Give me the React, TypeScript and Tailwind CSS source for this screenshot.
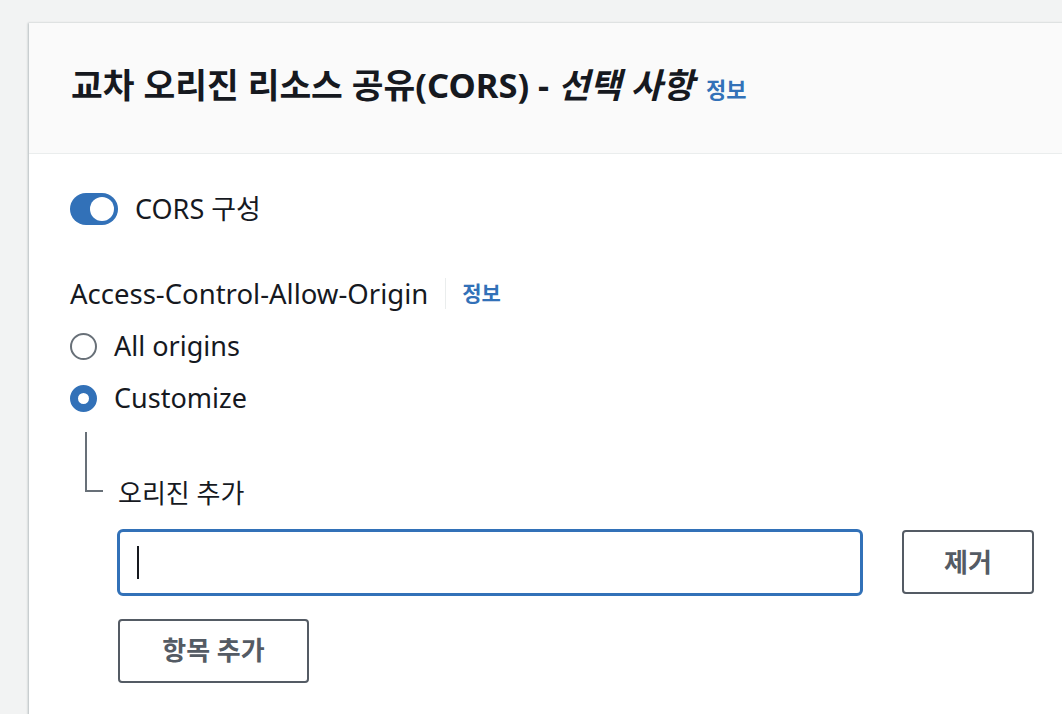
import React from 'react';

const font = { fontFamily: '"Noto Sans", "Noto Sans CJK KR", sans-serif' };

const App = () => {
  return (
    <div className="min-h-screen w-[1062px] h-[714px] overflow-hidden bg-[#f2f3f3] pt-[23px] pl-[29px]" style={font}>
      <div className="h-[700px] w-[1060px] bg-white shadow-[0_1px_2px_1px_rgba(0,28,36,0.25)]">
        {/* Header */}
        <div className="h-[131px] bg-[#fafafa] border-b border-[#eaeded] flex items-center pl-[42px] pb-[2px]">
          <h2 className="text-[34.5px] font-bold text-[#16191f] leading-[44px]">
            교차 오리진 리소스 공유(CORS) - <i>선택 사항</i>
            <span className="ml-[12px] text-[22px] text-[#3271b8] not-italic">정보</span>
          </h2>
        </div>

        {/* Body */}
        <div className="pl-[41px] pt-[35px]">
          <div className="flex items-center gap-[17px]">
            <div className="w-[48px] h-[32px] rounded-full bg-[#3271b8] relative">
              <div className="absolute right-[4px] top-[4px] w-[24px] h-[24px] rounded-full bg-white" />
            </div>
            <span className="text-[27px] text-[#16191f]">CORS 구성</span>
          </div>

          <div className="mt-[46px] flex items-center h-[36px]">
            <span className="text-[27.5px] text-[#16191f]">Access-Control-Allow-Origin</span>
            <span className="ml-[17px] w-px h-[31px] bg-[#eaeded]" />
            <span className="ml-[16px] text-[21px] font-bold text-[#3271b8]">정보</span>
          </div>

          <div className="mt-[17px] flex flex-col gap-[16px]">
            <label className="flex items-center gap-[17px] h-[36px]">
              <span className="w-[27px] h-[27px] rounded-full border-[2px] border-[#687078] bg-white" />
              <span className="text-[27px] text-[#16191f]">All origins</span>
            </label>
            <label className="flex items-center gap-[17px] h-[36px]">
              <span className="w-[27px] h-[27px] rounded-full border-[8px] border-[#3271b8] bg-white" />
              <span className="text-[27px] text-[#16191f]">Customize</span>
            </label>
          </div>

          {/* nested */}
          <div className="flex mt-[15px]">
            <div className="ml-[15px] w-[18px] h-[60px] border-l-[2px] border-b-[2px] border-[#687078]" />
            <span className="ml-[15px] mt-[43px] text-[26px] text-[#16191f] leading-[36px]">오리진 추가</span>
          </div>

          <div className="ml-[47px] mt-[18px] flex items-center">
            <div className="w-[746px] h-[67px] border-[3px] border-[#3271b8] rounded-[6px] flex items-center pl-[17px]">
              <span className="w-[2px] h-[33px] bg-[#16191f]" />
            </div>
            <button className="ml-[39px] w-[132px] h-[64px] border-[2px] border-[#545b64] rounded-[4px] text-[26px] font-bold text-[#545b64]">
              제거
            </button>
          </div>

          <button className="ml-[48px] mt-[23px] w-[191px] h-[64px] border-[2px] border-[#545b64] rounded-[4px] text-[26px] font-bold text-[#545b64]">
            항목 추가
          </button>
        </div>
      </div>
    </div>
  );
};

export default App;
